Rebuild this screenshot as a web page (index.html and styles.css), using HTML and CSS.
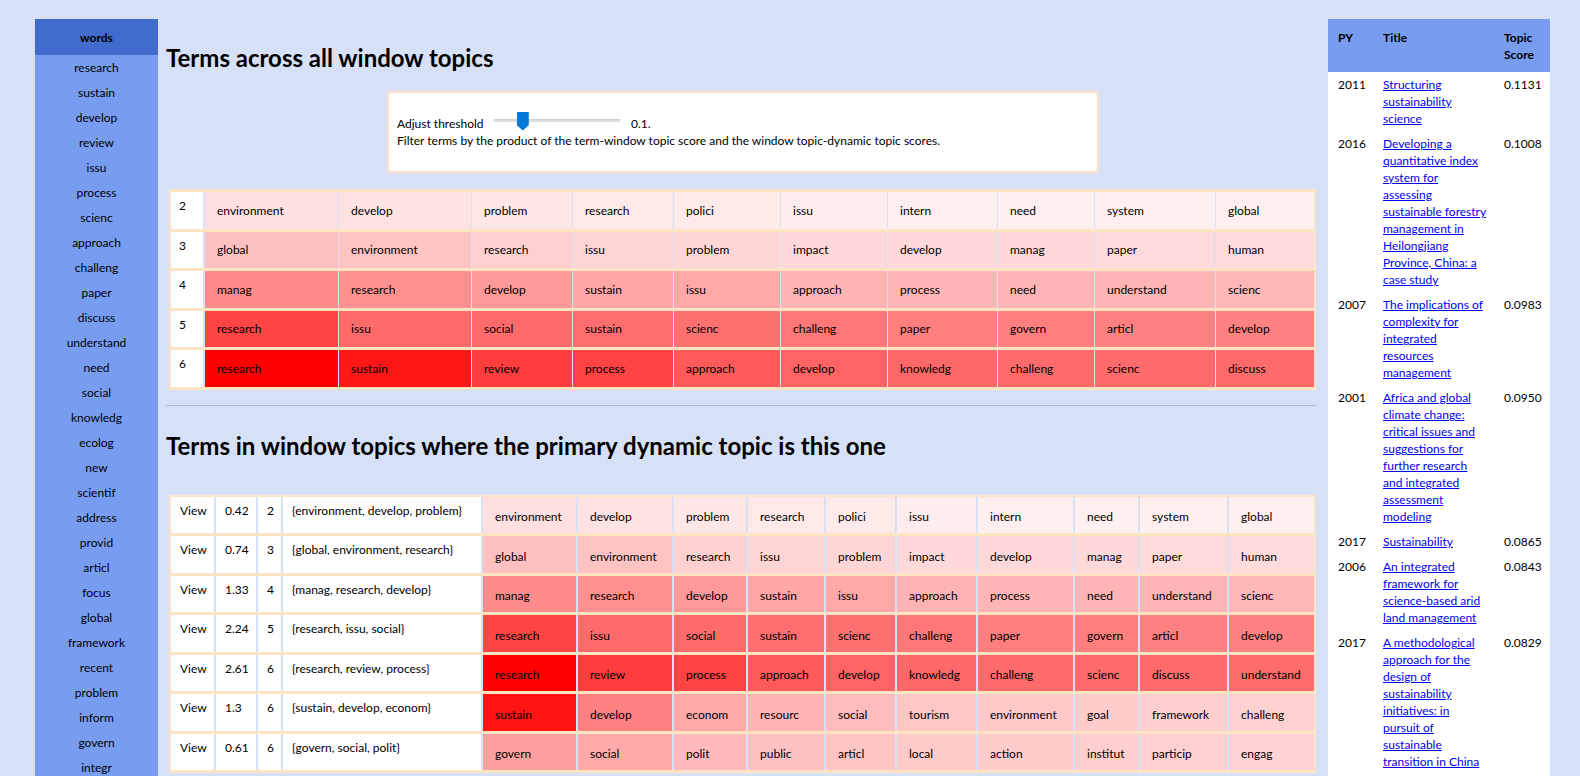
FILE: index.html
```html
<!DOCTYPE html>
<html lang="en">
<head>
<meta charset="utf-8">
<title>Dynamic topic terms</title>
<link rel="stylesheet" href="styles.css">
</head>
<body>
<div class="page">
  <aside class="words">
    <div class="words-head">words</div>
    <ul class="words-list">
      <li>research</li><li>sustain</li><li>develop</li><li>review</li><li>issu</li><li>process</li><li>scienc</li><li>approach</li><li>challeng</li><li>paper</li><li>discuss</li><li>understand</li><li>need</li><li>social</li><li>knowledg</li><li>ecolog</li><li>new</li><li>scientif</li><li>address</li><li>provid</li><li>articl</li><li>focus</li><li>global</li><li>framework</li><li>recent</li><li>problem</li><li>inform</li><li>govern</li><li>integr</li>
    </ul>
  </aside>

  <main class="main">
    <h2 class="title">Terms across all window topics</h2>

    <div class="threshold">
      <div class="thr-line">
        <label class="thr-label" for="thr">Adjust threshold</label>
        <input id="thr" class="slider" type="range" min="0" max="0.5" step="0.01" value="0.1">
        <span class="thr-val">0.1.</span>
      </div>
      <div class="thr-help">Filter terms by the product of the term-window topic score and the window topic-dynamic topic scores.</div>
    </div>

    <div class="frame t1">
      <div class="row">
        <div class="num">2</div>
        <div class="term" style="background:#ffdfdf">environment</div>
        <div class="term" style="background:#ffe2e2">develop</div>
        <div class="term" style="background:#ffe7e7">problem</div>
        <div class="term" style="background:#ffe8e8">research</div>
        <div class="term" style="background:#ffeaea">polici</div>
        <div class="term" style="background:#ffeded">issu</div>
        <div class="term" style="background:#ffeeee">intern</div>
        <div class="term" style="background:#ffefef">need</div>
        <div class="term" style="background:#ffefef">system</div>
        <div class="term" style="background:#fff0f0">global</div>
      </div>
      <div class="row">
        <div class="num">3</div>
        <div class="term" style="background:#ffc0c0">global</div>
        <div class="term" style="background:#ffc3c3">environment</div>
        <div class="term" style="background:#ffd0d0">research</div>
        <div class="term" style="background:#ffd4d4">issu</div>
        <div class="term" style="background:#ffd6d6">problem</div>
        <div class="term" style="background:#ffd9d9">impact</div>
        <div class="term" style="background:#ffd9d9">develop</div>
        <div class="term" style="background:#ffd9d9">manag</div>
        <div class="term" style="background:#ffdada">paper</div>
        <div class="term" style="background:#ffdbdb">human</div>
      </div>
      <div class="row">
        <div class="num">4</div>
        <div class="term" style="background:#ff8c8c">manag</div>
        <div class="term" style="background:#ff9090">research</div>
        <div class="term" style="background:#ff9999">develop</div>
        <div class="term" style="background:#ffa6a6">sustain</div>
        <div class="term" style="background:#ffa8a8">issu</div>
        <div class="term" style="background:#ffb3b3">approach</div>
        <div class="term" style="background:#ffb5b5">process</div>
        <div class="term" style="background:#ffb5b5">need</div>
        <div class="term" style="background:#ffb5b5">understand</div>
        <div class="term" style="background:#ffb7b7">scienc</div>
      </div>
      <div class="row">
        <div class="num">5</div>
        <div class="term" style="background:#ff4444">research</div>
        <div class="term" style="background:#ff6a6a">issu</div>
        <div class="term" style="background:#ff6b6b">social</div>
        <div class="term" style="background:#ff6e6e">sustain</div>
        <div class="term" style="background:#ff7070">scienc</div>
        <div class="term" style="background:#ff7777">challeng</div>
        <div class="term" style="background:#ff7f7f">paper</div>
        <div class="term" style="background:#ff7f7f">govern</div>
        <div class="term" style="background:#ff8080">articl</div>
        <div class="term" style="background:#ff8282">develop</div>
      </div>
      <div class="row">
        <div class="num">6</div>
        <div class="term" style="background:#ff0000">research</div>
        <div class="term" style="background:#ff1717">sustain</div>
        <div class="term" style="background:#ff3d3d">review</div>
        <div class="term" style="background:#ff4343">process</div>
        <div class="term" style="background:#ff5a5a">approach</div>
        <div class="term" style="background:#ff6363">develop</div>
        <div class="term" style="background:#ff6868">knowledg</div>
        <div class="term" style="background:#ff6a6a">challeng</div>
        <div class="term" style="background:#ff6b6b">scienc</div>
        <div class="term" style="background:#ff6b6b">discuss</div>
      </div>
    </div>

    <hr class="sep">

    <h2 class="title title2">Terms in window topics where the primary dynamic topic is this one</h2>

    <div class="frame t2">
      <div class="row">
        <div class="cell">View</div><div class="cell">0.42</div><div class="cell">2</div><div class="cell">{environment, develop, problem}</div>
        <div class="term" style="background:#ffdfdf">environment</div>
        <div class="term" style="background:#ffe2e2">develop</div>
        <div class="term" style="background:#ffe7e7">problem</div>
        <div class="term" style="background:#ffe8e8">research</div>
        <div class="term" style="background:#ffeaea">polici</div>
        <div class="term" style="background:#ffeded">issu</div>
        <div class="term" style="background:#ffeeee">intern</div>
        <div class="term" style="background:#ffefef">need</div>
        <div class="term" style="background:#ffefef">system</div>
        <div class="term" style="background:#fff0f0">global</div>
      </div>
      <div class="row">
        <div class="cell">View</div><div class="cell">0.74</div><div class="cell">3</div><div class="cell">{global, environment, research}</div>
        <div class="term" style="background:#ffc0c0">global</div>
        <div class="term" style="background:#ffc3c3">environment</div>
        <div class="term" style="background:#ffd0d0">research</div>
        <div class="term" style="background:#ffd4d4">issu</div>
        <div class="term" style="background:#ffd6d6">problem</div>
        <div class="term" style="background:#ffd9d9">impact</div>
        <div class="term" style="background:#ffd9d9">develop</div>
        <div class="term" style="background:#ffd9d9">manag</div>
        <div class="term" style="background:#ffdada">paper</div>
        <div class="term" style="background:#ffdbdb">human</div>
      </div>
      <div class="row">
        <div class="cell">View</div><div class="cell">1.33</div><div class="cell">4</div><div class="cell">{manag, research, develop}</div>
        <div class="term" style="background:#ff8c8c">manag</div>
        <div class="term" style="background:#ff9090">research</div>
        <div class="term" style="background:#ff9999">develop</div>
        <div class="term" style="background:#ffa6a6">sustain</div>
        <div class="term" style="background:#ffa8a8">issu</div>
        <div class="term" style="background:#ffb3b3">approach</div>
        <div class="term" style="background:#ffb5b5">process</div>
        <div class="term" style="background:#ffb5b5">need</div>
        <div class="term" style="background:#ffb5b5">understand</div>
        <div class="term" style="background:#ffb7b7">scienc</div>
      </div>
      <div class="row">
        <div class="cell">View</div><div class="cell">2.24</div><div class="cell">5</div><div class="cell">{research, issu, social}</div>
        <div class="term" style="background:#ff4444">research</div>
        <div class="term" style="background:#ff6a6a">issu</div>
        <div class="term" style="background:#ff6b6b">social</div>
        <div class="term" style="background:#ff6e6e">sustain</div>
        <div class="term" style="background:#ff7070">scienc</div>
        <div class="term" style="background:#ff7777">challeng</div>
        <div class="term" style="background:#ff7f7f">paper</div>
        <div class="term" style="background:#ff7f7f">govern</div>
        <div class="term" style="background:#ff8080">articl</div>
        <div class="term" style="background:#ff8282">develop</div>
      </div>
      <div class="row">
        <div class="cell">View</div><div class="cell">2.61</div><div class="cell">6</div><div class="cell">{research, review, process}</div>
        <div class="term" style="background:#ff0000">research</div>
        <div class="term" style="background:#ff3d3d">review</div>
        <div class="term" style="background:#ff4343">process</div>
        <div class="term" style="background:#ff5a5a">approach</div>
        <div class="term" style="background:#ff6363">develop</div>
        <div class="term" style="background:#ff6868">knowledg</div>
        <div class="term" style="background:#ff6a6a">challeng</div>
        <div class="term" style="background:#ff6b6b">scienc</div>
        <div class="term" style="background:#ff6b6b">discuss</div>
        <div class="term" style="background:#ff6c6c">understand</div>
      </div>
      <div class="row">
        <div class="cell">View</div><div class="cell">1.3</div><div class="cell">6</div><div class="cell">{sustain, develop, econom}</div>
        <div class="term" style="background:#ff1414">sustain</div>
        <div class="term" style="background:#ff8080">develop</div>
        <div class="term" style="background:#ffa8a8">econom</div>
        <div class="term" style="background:#ffb4b4">resourc</div>
        <div class="term" style="background:#ffbcbc">social</div>
        <div class="term" style="background:#ffc6c6">tourism</div>
        <div class="term" style="background:#ffc9c9">environment</div>
        <div class="term" style="background:#ffcbcb">goal</div>
        <div class="term" style="background:#ffcece">framework</div>
        <div class="term" style="background:#ffd2d2">challeng</div>
      </div>
      <div class="row">
        <div class="cell">View</div><div class="cell">0.61</div><div class="cell">6</div><div class="cell">{govern, social, polit}</div>
        <div class="term" style="background:#ffa0a0">govern</div>
        <div class="term" style="background:#ffaaaa">social</div>
        <div class="term" style="background:#ffbbbb">polit</div>
        <div class="term" style="background:#ffc0c0">public</div>
        <div class="term" style="background:#ffc5c5">articl</div>
        <div class="term" style="background:#ffcaca">local</div>
        <div class="term" style="background:#ffcccc">action</div>
        <div class="term" style="background:#ffcece">institut</div>
        <div class="term" style="background:#ffd0d0">particip</div>
        <div class="term" style="background:#ffd3d3">engag</div>
      </div>
    </div>
  </main>

  <aside class="docs">
    <table class="docs-table">
      <colgroup><col class="c-py"><col class="c-title"><col class="c-score"></colgroup>
      <thead>
        <tr><th>PY</th><th>Title</th><th>Topic Score</th></tr>
      </thead>
      <tbody>
        <tr><td>2011</td><td><a href="#">Structuring sustainability science</a></td><td>0.1131</td></tr>
        <tr><td>2016</td><td><a href="#">Developing a quantitative index system for assessing sustainable forestry management in Heilongjiang Province, China: a case study</a></td><td>0.1008</td></tr>
        <tr><td>2007</td><td><a href="#">The implications of complexity for integrated resources management</a></td><td>0.0983</td></tr>
        <tr><td>2001</td><td><a href="#">Africa and global climate change: critical issues and suggestions for further research and integrated assessment modeling</a></td><td>0.0950</td></tr>
        <tr><td>2017</td><td><a href="#">Sustainability</a></td><td>0.0865</td></tr>
        <tr><td>2006</td><td><a href="#">An integrated framework for science-based arid land management</a></td><td>0.0843</td></tr>
        <tr><td>2017</td><td><a href="#">A methodological approach for the design of sustainability initiatives: in pursuit of sustainable transition in China</a></td><td>0.0829</td></tr>
      </tbody>
    </table>
  </aside>
</div>
</body>
</html>
```

FILE: styles.css
```css
html, body {
  margin: 0;
  padding: 0;
}

body {
  background: #d6e0f6;
  font-family: Lato, "Open Sans", sans-serif;
  font-size: 12px;
  color: #000;
}

.page {
  display: flex;
  align-items: flex-start;
  padding: 19px 0 0 35px;
}

/* ---------- left word list ---------- */
.words {
  flex: 0 0 123px;
  background: #789df0;
}

.words-head {
  height: 36px;
  background: #416bcd;
  font-weight: bold;
  display: flex;
  align-items: center;
  justify-content: center;
}

.words-list {
  list-style: none;
  margin: 0;
  padding: 0;
}

.words-list li {
  height: 25px;
  line-height: 25px;
  text-align: center;
}

/* ---------- main column ---------- */
.main {
  flex: 0 0 1151px;
  margin-left: 7px;
}

.title {
  margin: 24px 0 0 1px;
  font-size: 24px;
  line-height: 29px;
  font-weight: bold;
}

.title2 {
  margin-top: 25px;
}

.threshold {
  width: 696px;
  margin: 19px 0 0 222px;
  background: #fff;
  border: 2px solid #fde2c6;
  border-radius: 4px;
  padding: 22px 4px 22px 8px;
  line-height: 17px;
}

.thr-line {
  display: flex;
  align-items: center;
  height: 17px;
}

.thr-label {
  width: 97px;
}

.slider {
  -webkit-appearance: none;
  appearance: none;
  width: 126px;
  height: 19px;
  margin: 0 0 7px 0;
  padding: 0;
  background: transparent;
}

.slider::-webkit-slider-runnable-track {
  height: 3px;
  background: #dcdcdc;
  border-top: 1px solid #d0d0d0;
  box-sizing: border-box;
}

.slider::-webkit-slider-thumb {
  -webkit-appearance: none;
  width: 12px;
  height: 19px;
  margin-top: -8px;
  background: #0078d7;
  border: 0;
  clip-path: polygon(0 0, 100% 0, 100% 72%, 50% 100%, 0 72%);
}

.thr-val {
  margin-left: 11px;
}

/* ---------- term grids ---------- */
.frame {
  margin-left: 4px;
  width: 1147px;
  box-sizing: border-box;
  background: #ffe4c4;
  display: flex;
  flex-direction: column;
  gap: 3px;
}

.t1 {
  margin-top: 16px;
  padding: 3px 2px;
}

.t2 {
  margin-top: 35px;
  padding: 2px 2px 3px;
}

.row {
  display: grid;
  background: #d6e0f6;
  height: 36.5px;
}

.t1 .row {
  grid-template-columns: 33px 133px 132px 100px 100px 106px 106px 109px 96px 120px 1fr;
  column-gap: 1px;
}

.t2 .row {
  grid-template-columns: 43px 40px 23px 198px 93px 94px 72px 76px 69px 79px 95px 63px 87px 1fr;
  column-gap: 2px;
}

.num,
.cell {
  background: #fff;
  padding: 5px 8px 0;
  line-height: 17px;
  white-space: nowrap;
}

.cell {
  padding-left: 9px;
}

.num {
  margin-right: 1px;
}

.term {
  display: flex;
  align-items: center;
  padding: 0 12px;
  white-space: nowrap;
  overflow: hidden;
}

.t2 .term {
  padding-top: 4px;
}

.sep {
  border: 0;
  border-top: 1px solid #b3b8c4;
  height: 0;
  margin: 15px 0 0 1px;
}

/* ---------- right documents table ---------- */
.docs {
  flex: 0 0 222px;
  align-self: stretch;
  margin-left: 12px;
  background: #fff;
}

.docs-table {
  width: 222px;
  table-layout: fixed;
  border-collapse: collapse;
  line-height: 17px;
}

.c-py { width: 46px; }
.c-title { width: 121px; }
.c-score { width: 55px; }

.docs-table th {
  background: #789df0;
  text-align: left;
  vertical-align: top;
  font-weight: bold;
  padding: 9.5px 9px;
}

.docs-table td {
  vertical-align: top;
  padding: 4px 9px;
}

.docs-table td:nth-child(2) {
  padding-right: 7px;
}

.docs-table th:first-child,
.docs-table td:first-child {
  padding-left: 10px;
}

.docs-table th:last-child,
.docs-table td:last-child {
  padding-right: 10px;
}

.docs-table a {
  color: #0000ee;
  text-decoration: underline;
}
```
